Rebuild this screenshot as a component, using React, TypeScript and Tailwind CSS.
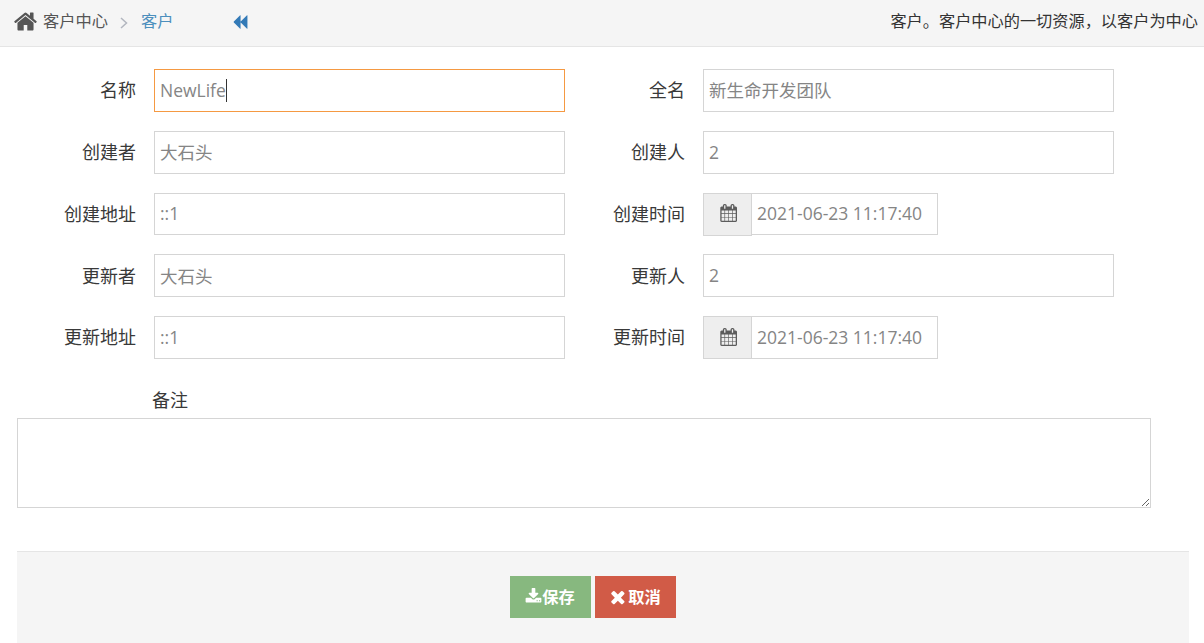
const font = "[font-family:'Open_Sans','Noto_Sans_CJK_SC',sans-serif]";
const inputCls = "h-full border border-[#d5d5d5] bg-white pl-[5px] pr-[6px] pb-[1px] text-[17.5px] text-[#858585] outline-none";

function Icon({ d, size, box = "0 0 1792 1792", className = "" }: { d: string; size: number; box?: string; className?: string }) {
  return (
    <svg viewBox={box} width={size} height={size} fill="currentColor" className={`shrink-0 ${className}`}>
      <path d={d} />
    </svg>
  );
}

const homeD = "M1472 992v480q0 26-19 45t-45 19h-384v-384h-256v384h-384q-26 0-45-19t-19-45v-480q0-1 .5-3t.5-3l575-474 575 474q1 2 1 6zm223-69l-62 74q-8 9-21 11h-3q-13 0-21-7l-692-577-692 577q-12 8-24 7-13-2-21-11l-62-74q-8-10-7-23.500t11-21.500l719-599q32-26 76-26t76 26l244 204v-195q0-14 9-23t23-9h192q14 0 23 9t9 23v408l219 182q10 8 11 21.500t-7 23.500z";
const calD = "M192 1664h288v-288h-288v288zm352 0h320v-288h-320v288zm-352-352h288v-320h-288v320zm352 0h320v-320h-320v320zm-352-384h288v-288h-288v288zm736 736h320v-288h-320v288zm-384-736h320v-288h-320v288zm768 736h288v-288h-288v288zm-384-352h320v-320h-320v320zm-352-864v-288q0-13-9.500-22.500t-22.500-9.500h-64q-13 0-22.500 9.500t-9.500 22.500v288q0 13 9.500 22.500t22.500 9.500h64q13 0 22.500-9.500t9.500-22.500zm736 864h288v-320h-288v320zm-384-384h320v-288h-320v288zm384 0h288v-288h-288v288zm32-480v-288q0-13-9.500-22.500t-22.500-9.500h-64q-13 0-22.500 9.500t-9.500 22.500v288q0 13 9.500 22.500t22.500 9.500h64q13 0 22.500-9.500t9.500-22.500zm384-64v1280q0 52-38 90t-90 38h-1408q-52 0-90-38t-38-90v-1280q0-52 38-90t90-38h128v-96q0-66 47-113t113-47h64q66 0 113 47t47 113v96h384v-96q0-66 47-113t113-47h64q66 0 113 47t47 113v96h128q52 0 90 38t38 90z";
const downD = "M1344 1344q0-26-19-45t-45-19-45 19-19 45 19 45 45 19 45-19 19-45zm256 0q0-26-19-45t-45-19-45 19-19 45 19 45 45 19 45-19 19-45zm128-224v320q0 40-28 68t-68 28h-1472q-40 0-68-28t-28-68v-320q0-40 28-68t68-28h465l135 136q58 56 136 56t136-56l136-136h464q40 0 68 28t28 68zm-325-569q17 41-14 70l-448 448q-18 19-45 19t-45-19l-448-448q-31-29-14-70 17-39 59-39h256v-448q0-26 19-45t45-19h256q26 0 45 19t19 45v448h256q42 0 59 39z";
const timesD = "M1298 1314q0 40-28 68l-136 136q-28 28-68 28t-68-28l-294-294-294 294q-28 28-68 28t-68-28l-136-136q-28-28-28-68t28-68l294-294-294-294q-28-28-28-68t28-68l136-136q28-28 68-28t68 28l294 294 294-294q28-28 68-28t68 28l136 136q28 28 28 68t-28 68l-294 294 294 294q28 28 28 68z";
const backD = "M1683 141q19-19 32-13t13 32v1472q0 26-13 32t-32-13l-710-710q-9-9-13-19v710q0 26-13 32t-32-13l-710-710q-19-19-19-45t19-45l710-710q19-19 32-13t13 32v710q4-10 13-19z";

function Field({ label, labelW, value, focus }: { label: string; labelW: string; value: string; focus?: boolean }) {
  return (
    <div className="flex h-[42.75px] items-center">
      <label className={`${labelW} shrink-0 pt-[1px] text-right text-[18px] text-[#393939]`}>{label}</label>
      <div className="relative ml-[18px] h-full w-[411px]">
        <input readOnly value={value} className={`${inputCls} w-full ${focus ? "border-[#f59942]" : ""}`} />
        {focus && <span className="absolute left-[72px] top-[10px] h-[23px] w-px bg-[#333]" />}
      </div>
    </div>
  );
}

function DateField({ label, value }: { label: string; value: string }) {
  return (
    <div className="flex h-[42.75px] items-center">
      <label className="w-[120px] shrink-0 pt-[1px] text-right text-[18px] text-[#393939]">{label}</label>
      <div className="ml-[18px] flex h-full">
        <span className="flex h-[43px] w-[49px] items-center justify-center border border-[#d5d5d5] bg-[#eeeeee] text-[#5c5c5c]">
          <Icon d={calD} size={18} box="0 0 1664 1792" className="-mt-[2px]" />
        </span>
        <input readOnly value={value} className={`${inputCls} -ml-px w-[187px]`} />
      </div>
    </div>
  );
}

export default function App() {
  return (
    <div className={`${font} h-[643px] w-[1204px] overflow-hidden bg-white`}>
      <header className="flex h-[47px] items-center justify-between border-b border-[#e5e5e5] bg-[#f5f5f5] pb-[3px] pl-[13px] pr-[6px]">
        <div className="flex items-center text-[16.25px]">
          <Icon d={homeD} size={25} className="-mt-[1px] text-[#555]" />
          <a className="ml-[5px] text-[#555]">客户中心</a>
          <svg viewBox="0 0 8 12" width="8" height="12" fill="none" stroke="#b2b6bf" strokeWidth="1.5" className="ml-[12px] mt-[2px]">
            <path d="M1 1l5.500 5-5.500 5" />
          </svg>
          <a className="ml-[13px] text-[#4c8fbd]">客户</a>
          <Icon d={backD} size={16} className="ml-[58px] text-[#337ab7]" />
        </div>
        <p className="text-[16.2px] text-[#333]">客户。客户中心的一切资源，以客户为中心</p>
      </header>

      <form>
        <div className="mt-[22px] grid grid-cols-[565px_549px] gap-y-[19px]">
          <Field label="名称" labelW="w-[136px]" value="NewLife" focus />
          <Field label="全名" labelW="w-[120px]" value="新生命开发团队" />
          <Field label="创建者" labelW="w-[136px]" value="大石头" />
          <Field label="创建人" labelW="w-[120px]" value="2" />
          <Field label="创建地址" labelW="w-[136px]" value="::1" />
          <DateField label="创建时间" value="2021-06-23 11:17:40" />
          <Field label="更新者" labelW="w-[136px]" value="大石头" />
          <Field label="更新人" labelW="w-[120px]" value="2" />
          <Field label="更新地址" labelW="w-[136px]" value="::1" />
          <DateField label="更新时间" value="2021-06-23 11:17:40" />
        </div>

        <div className="ml-[17px] mt-[29px]">
          <label className="ml-[135px] block text-[18px] leading-[24px] text-[#393939]">备注</label>
          <textarea className="mt-[6px] block h-[90px] w-[1134px] border border-[#d5d5d5] bg-white outline-none" />
        </div>

        <div className="ml-[17px] mt-[43px] flex h-[92px] w-[1172px] justify-center gap-[4px] border-t border-[#e5e5e5] bg-[#f5f5f5] pr-[20px] pt-[24px]">
          <button type="button" className="flex h-[42px] w-[81px] items-center justify-center bg-[#87b87f] text-[16.25px] font-bold text-white">
            <Icon d={downD} size={17} className="-ml-[1px]" />保存
          </button>
          <button type="button" className="flex h-[42px] w-[81px] items-center justify-center bg-[#d15b47] text-[16.25px] font-bold text-white">
            <Icon d={timesD} size={20} className="-mr-[2px]" />取消
          </button>
        </div>
      </form>
    </div>
  );
}
